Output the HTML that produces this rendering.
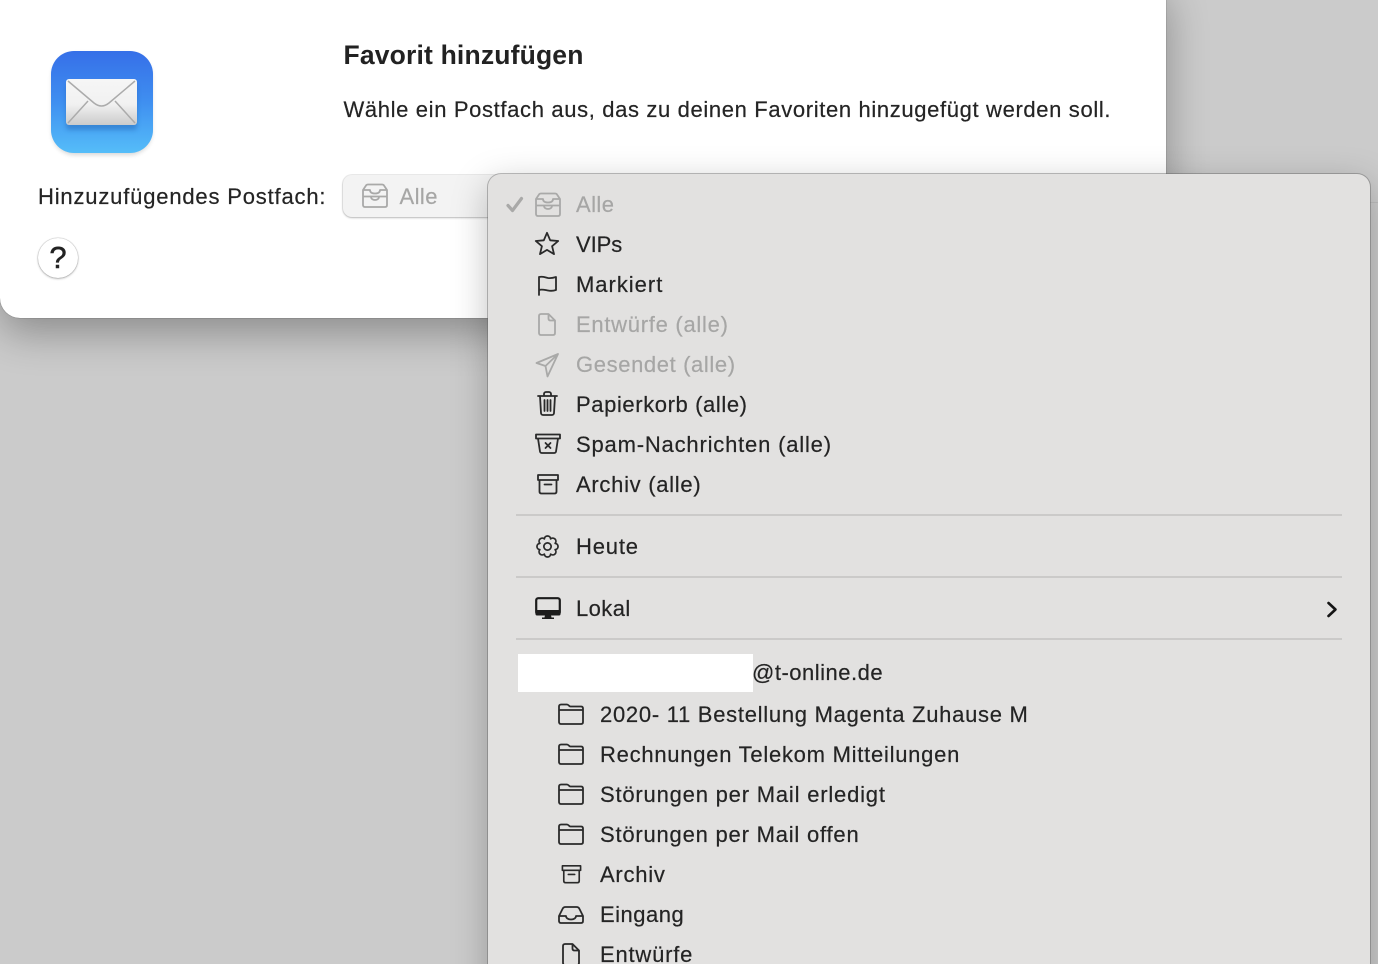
<!DOCTYPE html>
<html lang="de"><head><meta charset="utf-8"><title>Favorit hinzufügen</title>
<style>
html,body{margin:0;padding:0;width:1378px;height:964px;overflow:hidden;background:#cbcbcb}
body{position:relative;font-family:"Liberation Sans",sans-serif;color:#242424}
.bgline{position:absolute;left:1366px;top:202px;width:12px;height:1px;background:#bdbdbd}
.dialog{position:absolute;left:0;top:-20px;width:1166px;height:338px;background:#fff;border-radius:20px;box-shadow:0 0 1px rgba(0,0,0,.55),0 14px 42px rgba(0,0,0,.32)}
.t{position:absolute;white-space:nowrap;font-size:22px;line-height:28px;letter-spacing:.42px;-webkit-text-stroke:.2px currentColor}
.menu{position:absolute;left:488px;top:174px;width:882px;height:830px;background:#e2e1e0;border-radius:13px;box-shadow:0 0 0 1px rgba(90,90,90,.4),0 10px 36px rgba(0,0,0,.25)}
.sep{position:absolute;left:516px;width:826px;height:2px;background:#cbcac9}
.g{color:#a6a6a5}
svg.i{position:absolute;overflow:visible;fill:none;stroke:#2a2a2a;stroke-width:1.8;stroke-linejoin:round;stroke-linecap:round}
svg.i.d{stroke:#a9a9a8}
.popup{position:absolute;left:343px;top:175px;width:190px;height:42px;border-radius:9px;background:#f3f3f3;box-shadow:0 0 0 1px rgba(0,0,0,.07),0 1px 2px rgba(0,0,0,.22)}
.help{position:absolute;left:38px;top:238px;width:40px;height:40px;border-radius:50%;background:#fff;box-shadow:0 0 1px rgba(0,0,0,.5),0 1px 2px rgba(0,0,0,.25);text-align:center;font-size:31px;line-height:40px;color:#222;-webkit-text-stroke:.5px #222}
</style></head>
<body>
<svg width="0" height="0" style="position:absolute">
<defs>
<symbol id="tray2" viewBox="0 0 26 26"><path d="M1 13V7L4 2.500C4.500 1.700 5 1.500 6 1.500h14c1 0 1.500.2 2 1L25 7v6M1 7h7c0 2.500 2 3.500 5 3.500s5-1 5-3.500h7M1 13.500h24V22c0 1.300-.7 2-2 2H3c-1.300 0-2-.7-2-2zM9 13.500c0 2.500 2 3.500 4 3.500s4-1 4-3.500"/></symbol>
<symbol id="folder" viewBox="0 0 26 22"><path d="M1 7V3.500C1 2.300 1.800 1.500 3 1.500h6c1.500 0 2 2 3.500 2H23c1.300 0 2 .7 2 2V19c0 1.300-.7 2-2 2H3c-1.300 0-2-.7-2-2zM1 7h24"/></symbol>
<symbol id="archive" viewBox="0 0 24 22"><path d="M2 2h20v5H2zM3.500 7v11.500c0 1.300.7 2 2 2h13c1.300 0 2-.7 2-2V7M8.500 11.500h7"/></symbol>
</defs></svg>

<div class="bgline"></div>
<div class="dialog"></div>

<!-- Mail icon -->
<svg style="position:absolute;left:48px;top:48px;overflow:visible" width="108" height="108" viewBox="0 0 108 108">
<defs>
<linearGradient id="b" x1="0" y1="0" x2="0" y2="1"><stop offset="0" stop-color="#366fe8"/><stop offset=".5" stop-color="#3f8ff0"/><stop offset="1" stop-color="#55bdf9"/></linearGradient>
<linearGradient id="w" x1="0" y1="0" x2="0" y2="1"><stop offset="0" stop-color="#f6f6f6"/><stop offset=".55" stop-color="#f1f1f1"/><stop offset="1" stop-color="#cbcbcb"/></linearGradient>
<filter id="s" x="-30%" y="-30%" width="160%" height="160%"><feGaussianBlur stdDeviation="2.500"/></filter>
</defs>
<rect x="4" y="6" width="100" height="101" rx="23" fill="#000" opacity=".16" filter="url(#s)"/>
<rect x="3" y="3" width="102" height="102" rx="23" fill="url(#b)"/>
<rect x="18" y="36" width="71" height="46" rx="3" fill="#1c5aa8" opacity=".4" filter="url(#s)"/>
<rect x="18" y="31" width="71" height="46" rx="3" fill="url(#w)"/>
<path d="M20 33l26 22c5 4 10 4 15 0l26-22M20 75l20-22M87 75L67 53" fill="none" stroke="#ababab" stroke-width="1.500"/>
</svg>

<div class="t" style="left:343.500px;top:41px;font-size:26.500px;font-weight:700;letter-spacing:.17px;color:#222;-webkit-text-stroke:0">Favorit hinzufügen</div>
<div class="t" style="left:343.500px;top:96px;letter-spacing:.64px">Wähle ein Postfach aus, das zu deinen Favoriten hinzugefügt werden soll.</div>
<div class="t" style="left:38px;top:183px;letter-spacing:.82px">Hinzuzufügendes Postfach:</div>

<div class="popup"></div>
<svg class="i d" style="left:362px;top:183px" width="26" height="26"><use href="#tray2"/></svg>
<div class="t g" style="left:399.500px;top:183px">Alle</div>
<div class="help">?</div>

<div class="menu"></div>

<svg class="i d" style="left:506px;top:197px;stroke-width:3.200" width="18" height="16"><path d="M2 8.500l4.500 5L15.500 1.500"/></svg>
<svg class="i d" style="left:535px;top:192px" width="26" height="26"><use href="#tray2"/></svg>
<div class="t g" style="left:576px;top:191px">Alle</div>

<svg class="i" style="left:535px;top:232px" width="24" height="24" viewBox="0 0 24 24"><path d="M12 .8l3.200 7.500 8 .7-6.100 5.200 1.900 7.900-7-4.200-7 4.200 1.900-7.900L.8 9l8-.7z"/></svg>
<div class="t" style="left:576px;top:231px;letter-spacing:-.08px">VIPs</div>

<svg class="i" style="left:537px;top:274px" width="22" height="22" viewBox="0 0 22 22"><path d="M2 21V3c4-1 6 .5 9 1 2.500.3 5 0 8-1v13c-3 1-5.500 1-8 .5-3-.5-6-1.500-9-.5"/></svg>
<div class="t" style="left:576px;top:271px;letter-spacing:.98px">Markiert</div>

<svg class="i d" style="left:538px;top:313px" width="18" height="23" viewBox="0 0 18 23"><path d="M1 3c0-1.300.7-2 2-2h7.500L17 7.500V20c0 1.300-.7 2-2 2H3c-1.300 0-2-.7-2-2zM10.500 1v4.500c0 1.300.7 2 2 2H17"/></svg>
<div class="t g" style="left:576px;top:311px;letter-spacing:.72px">Entwürfe (alle)</div>

<svg class="i d" style="left:536px;top:353px" width="23" height="23" viewBox="0 0 23 23"><path d="M22 1L.5 10l9 3 2 10.500zM22 1L9.500 13"/></svg>
<div class="t g" style="left:576px;top:351px;letter-spacing:.62px">Gesendet (alle)</div>

<svg class="i" style="left:537px;top:391px" width="21" height="25" viewBox="0 0 21 25"><path d="M1 5h19M7 5V3c0-1 .8-2 2-2h3c1.200 0 2 1 2 2v2M3 5l1 17c0 1.300 1 2 2 2h9c1 0 2-.7 2-2l1-17M7.500 9v11M10.500 9v11M13.500 9v11"/></svg>
<div class="t" style="left:576px;top:391px;letter-spacing:.6px">Papierkorb (alle)</div>

<svg class="i" style="left:535px;top:433px" width="26" height="21" viewBox="0 0 26 21"><path d="M1 1.500h24v4H1zM3 5.500l2 13c.2 1 1 1.500 2 1.500h12c1 0 1.800-.5 2-1.500l2-13M10.500 10l5 5M15.500 10l-5 5"/></svg>
<div class="t" style="left:576px;top:431px;letter-spacing:.81px">Spam-Nachrichten (alle)</div>

<svg class="i" style="left:535.500px;top:473px" width="24" height="22" viewBox="0 0 24 22"><use href="#archive"/></svg>
<div class="t" style="left:576px;top:471px;letter-spacing:.71px">Archiv (alle)</div>

<div class="sep" style="top:514px"></div>

<svg class="i" style="left:535.500px;top:535px" width="23" height="23" viewBox="0 0 24 24"><circle cx="12" cy="12" r="3.800"/><path d="M19.950 8.710A3.300 3.300 0 0 1 19.950 15.290A3.300 3.300 0 0 1 15.290 19.950A3.300 3.300 0 0 1 8.710 19.950A3.300 3.300 0 0 1 4.050 15.290A3.300 3.300 0 0 1 4.050 8.710A3.300 3.300 0 0 1 8.710 4.050A3.300 3.300 0 0 1 15.290 4.050A3.300 3.300 0 0 1 19.950 8.710z"/></svg>
<div class="t" style="left:576px;top:533px;letter-spacing:.82px">Heute</div>

<div class="sep" style="top:576px"></div>

<svg class="i" style="left:534px;top:597px;stroke:#1c1c1c;stroke-width:2.200" width="28" height="23" viewBox="0 0 28 23"><rect x="2.200" y="1.200" width="23.600" height="16" rx="2"/><path d="M2 13.500h24V17c0 .7-.5 1-1 1H3c-.5 0-1-.3-1-1z" fill="#1c1c1c" stroke-width="1"/><path d="M11 18h6l.5 2.500H20V22H8v-1.500h2.500z" fill="#1c1c1c" stroke="none"/></svg>
<div class="t" style="left:576px;top:595px">Lokal</div>
<svg class="i" style="left:1326px;top:601px;stroke:#151515;stroke-width:2.600" width="12" height="17" viewBox="0 0 12 17"><path d="M2.500 2l7 6.500-7 6.500"/></svg>

<div class="sep" style="top:638px"></div>

<div style="position:absolute;left:518px;top:654px;width:235px;height:38px;background:#fff"></div>
<div class="t" style="left:752px;top:659px;letter-spacing:.5px">@t-online.de</div>

<svg class="i" style="left:558px;top:703px" width="26" height="22"><use href="#folder"/></svg>
<div class="t" style="left:600px;top:701px;letter-spacing:.72px">2020- 11 Bestellung Magenta Zuhause M</div>
<svg class="i" style="left:558px;top:743px" width="26" height="22"><use href="#folder"/></svg>
<div class="t" style="left:600px;top:741px;letter-spacing:.74px">Rechnungen Telekom Mitteilungen</div>
<svg class="i" style="left:558px;top:783px" width="26" height="22"><use href="#folder"/></svg>
<div class="t" style="left:600px;top:781px;letter-spacing:.8px">Störungen per Mail erledigt</div>
<svg class="i" style="left:558px;top:823px" width="26" height="22"><use href="#folder"/></svg>
<div class="t" style="left:600px;top:821px;letter-spacing:.79px">Störungen per Mail offen</div>
<svg class="i" style="left:560px;top:864px" width="23" height="20" viewBox="0 0 24 22"><use href="#archive"/></svg>
<div class="t" style="left:600px;top:861px;letter-spacing:.75px">Archiv</div>
<svg class="i" style="left:558px;top:906px" width="26" height="18" viewBox="0 0 26 18"><path d="M1 10L4.500 3C5 1.800 6 1 7.500 1h11c1.500 0 2.500.8 3 2l3.500 7v5c0 1.300-.7 2-2 2H3c-1.300 0-2-.7-2-2zM1 10h7c0 2 2 3.500 5 3.500s5-1.500 5-3.500h7"/></svg>
<div class="t" style="left:600px;top:901px;letter-spacing:.5px">Eingang</div>
<svg class="i" style="left:562px;top:943px" width="18" height="23" viewBox="0 0 18 23"><path d="M1 3c0-1.300.7-2 2-2h7.500L17 7.500V20c0 1.300-.7 2-2 2H3c-1.300 0-2-.7-2-2zM10.500 1v4.500c0 1.300.7 2 2 2H17"/></svg>
<div class="t" style="left:600px;top:941px;letter-spacing:.8px">Entwürfe</div>
</body></html>
